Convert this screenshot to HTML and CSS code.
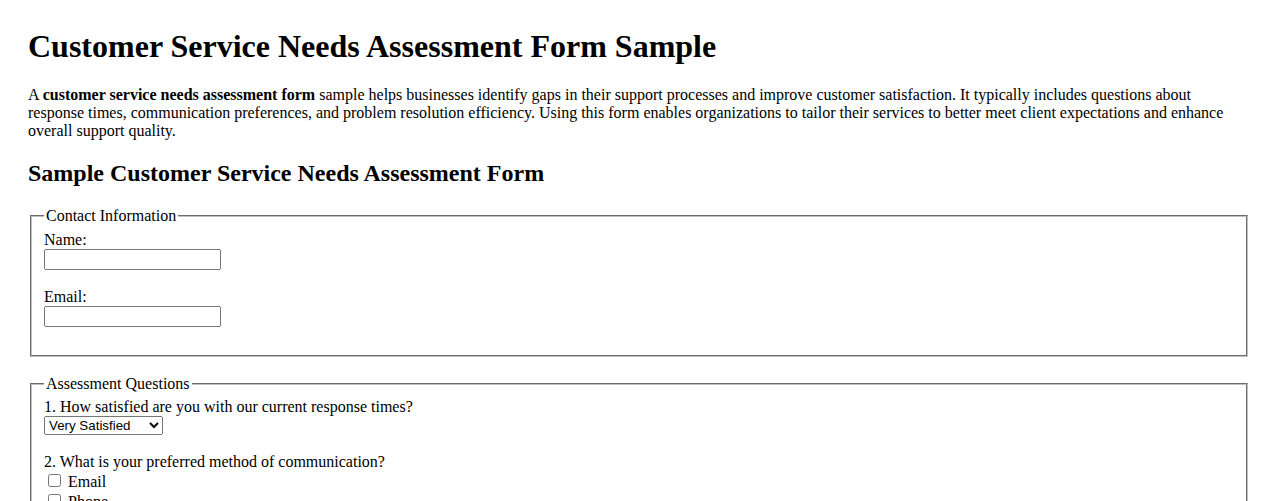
FILE: index.html
```html
<!DOCTYPE html>
<html lang="en">
<head>
<meta charset="utf-8">
<title>Customer Service Needs Assessment Form Sample</title>
<link rel="stylesheet" href="styles.css">
</head>
<body>
<h1 class="title">Customer Service Needs Assessment Form Sample</h1>
<p class="intro">A <strong>customer service needs assessment form</strong> sample helps businesses identify gaps in their support processes and improve customer satisfaction. It typically includes questions about response times, communication preferences, and problem resolution efficiency. Using this form enables organizations to tailor their services to better meet client expectations and enhance overall support quality.</p>
<h2 class="subtitle">Sample Customer Service Needs Assessment Form</h2>
<form class="form">
  <fieldset class="section">
    <legend>Contact Information</legend>
    <label for="name">Name:</label><br>
    <input class="text-field" type="text" id="name" name="name"><br><br>
    <label for="email">Email:</label><br>
    <input class="text-field" type="email" id="email" name="email"><br><br>
  </fieldset>
  <fieldset class="section">
    <legend>Assessment Questions</legend>
    <label for="q1">1. How satisfied are you with our current response times?</label><br>
    <select class="choice" id="q1" name="q1">
      <option>Very Satisfied</option>
      <option>Satisfied</option>
      <option>Neutral</option>
      <option>Dissatisfied</option>
    </select><br><br>
    <span>2. What is your preferred method of communication?</span><br>
    <label><input class="tick" type="checkbox" name="comm" value="email"> Email</label><br>
    <label><input class="tick" type="checkbox" name="comm" value="phone"> Phone</label><br>
    <label><input class="tick" type="checkbox" name="comm" value="chat"> Live Chat</label><br><br>
    <label for="q3">3. What areas of our support need the most improvement?</label><br>
    <textarea class="area" id="q3" name="q3" rows="4" cols="50"></textarea><br><br>
  </fieldset>
  <input class="submit" type="submit" value="Submit Assessment">
</form>
</body>
</html>
```
FILE: styles.css
```css
html {
  background: #ffffff;
}
body {
  margin: 0;
  padding: 28px;
  font-family: "Liberation Serif", "Times New Roman", serif;
  font-size: 16px;
  color: #000000;
}
.title {
  margin: 0 0 21.44px;
  font-size: 32px;
  font-weight: bold;
}
.intro {
  margin: 0 0 16px;
}
.subtitle {
  font-size: 24px;
  font-weight: bold;
  margin: 19.92px 0;
}
.form {
  margin: 0;
}
.section {
  margin: 0 2px 18px;
  padding: 0.35em 0.75em 0.625em;
  border: 2px groove rgb(192, 192, 192);
}
.section legend {
  padding: 0 2px;
}
.text-field {
  box-sizing: border-box;
  width: 177px;
  height: 21px;
  font-family: "Liberation Sans", Arial, sans-serif;
  font-size: 13.33px;
}
.choice {
  box-sizing: border-box;
  width: 119px;
  height: 19px;
  font-family: "Liberation Sans", Arial, sans-serif;
  font-size: 13.33px;
}
.tick {
  margin: 3px 3px 3px 4px;
}
.area {
  font-family: "Liberation Mono", monospace;
  font-size: 13.33px;
}
.submit {
  font-family: "Liberation Sans", Arial, sans-serif;
  font-size: 13.33px;
}
```
